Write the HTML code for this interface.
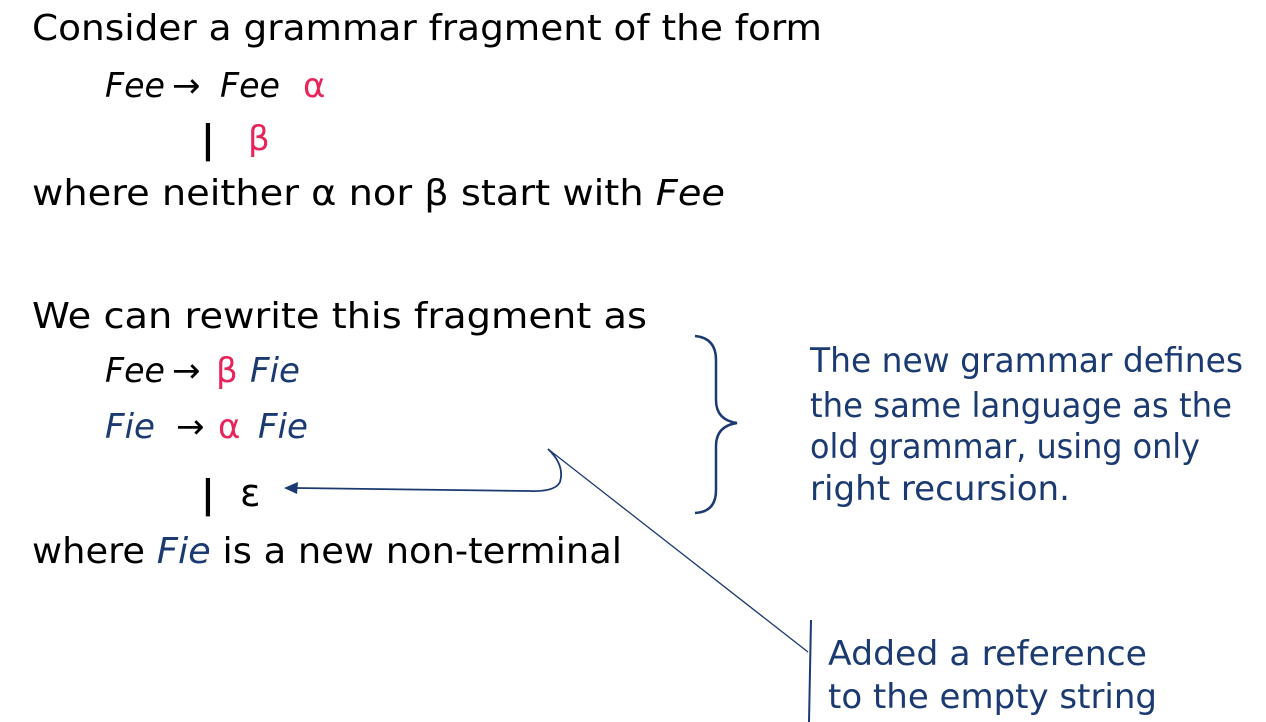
<!DOCTYPE html>
<html><head><meta charset="utf-8"><style>
html,body{margin:0;padding:0;background:#fff;}
svg{display:block}
text{font-family:"DejaVu Sans","Liberation Sans",sans-serif;}
.b{fill:#000}.n{fill:#1b3a72}.p{fill:#e8245a}
</style></head><body>
<svg width="1266" height="722" viewBox="0 0 1266 722" xmlns="http://www.w3.org/2000/svg">
<g font-size="36">
<text x="32" y="40" textLength="790" lengthAdjust="spacingAndGlyphs">Consider a grammar fragment of the form</text>
<text x="32" y="205" textLength="693" lengthAdjust="spacingAndGlyphs">where neither <tspan>α</tspan> nor <tspan>β</tspan> start with <tspan font-style="italic">Fee</tspan></text>
<text x="32" y="328" textLength="615" lengthAdjust="spacingAndGlyphs">We can rewrite this fragment as</text>
<text x="32" y="563" textLength="590" lengthAdjust="spacingAndGlyphs">where <tspan class="n" font-style="italic">Fie</tspan> is a new non-terminal</text>
</g>
<g font-size="34">
<text x="105" y="97" font-style="italic" textLength="60" lengthAdjust="spacingAndGlyphs">Fee</text><text x="172" y="97">→</text><text x="220" y="97" font-style="italic" textLength="60" lengthAdjust="spacingAndGlyphs">Fee</text><text x="303" y="97" class="p">α</text>
<text x="201" y="152" font-size="38" font-weight="bold">|</text><text x="248" y="150" class="p">β</text>
<text x="105" y="382" font-style="italic" textLength="60" lengthAdjust="spacingAndGlyphs">Fee</text><text x="172" y="382">→</text><text x="216" y="382" class="p">β</text><text x="250" y="382" class="n" font-style="italic" textLength="50" lengthAdjust="spacingAndGlyphs">Fie</text>
<text x="105" y="438" class="n" font-style="italic" textLength="50" lengthAdjust="spacingAndGlyphs">Fie</text><text x="176" y="438">→</text><text x="218" y="438" class="p">α</text><text x="258" y="438" class="n" font-style="italic" textLength="50" lengthAdjust="spacingAndGlyphs">Fie</text>
<text x="201" y="507" font-size="38" font-weight="bold">|</text><text x="240" y="506" font-size="38">ε</text>
</g>
<g font-size="34" class="n">
<text x="810" y="372" textLength="433" lengthAdjust="spacingAndGlyphs">The new grammar defines</text>
<text x="810" y="417" textLength="422" lengthAdjust="spacingAndGlyphs">the same language as the</text>
<text x="810" y="458" textLength="390" lengthAdjust="spacingAndGlyphs">old grammar, using only</text>
<text x="810" y="500" textLength="260" lengthAdjust="spacingAndGlyphs">right recursion.</text>
<text x="828" y="665" textLength="319" lengthAdjust="spacingAndGlyphs">Added a reference</text>
<text x="828" y="708" textLength="329" lengthAdjust="spacingAndGlyphs">to the empty string</text>
</g>
<path d="M695 336 Q716 338 716 360 L716 400 Q716 420 737 423 Q716 426 716 446 L716 490 Q716 512 695 513" fill="none" stroke="#1b3a72" stroke-width="2.5"/>
<path d="M548 449 Q565 465 560 482 Q555 492 530 491 L296 488" fill="none" stroke="#1b3a72" stroke-width="1.8"/>
<path d="M284 488 L298 482 L297 494 Z" fill="#1b3a72"/>
<path d="M548 449 L808 652" fill="none" stroke="#1b3a72" stroke-width="1.3"/>
<path d="M811 620 L809 722" fill="none" stroke="#1b3a72" stroke-width="2"/>
</svg>
</body></html>
